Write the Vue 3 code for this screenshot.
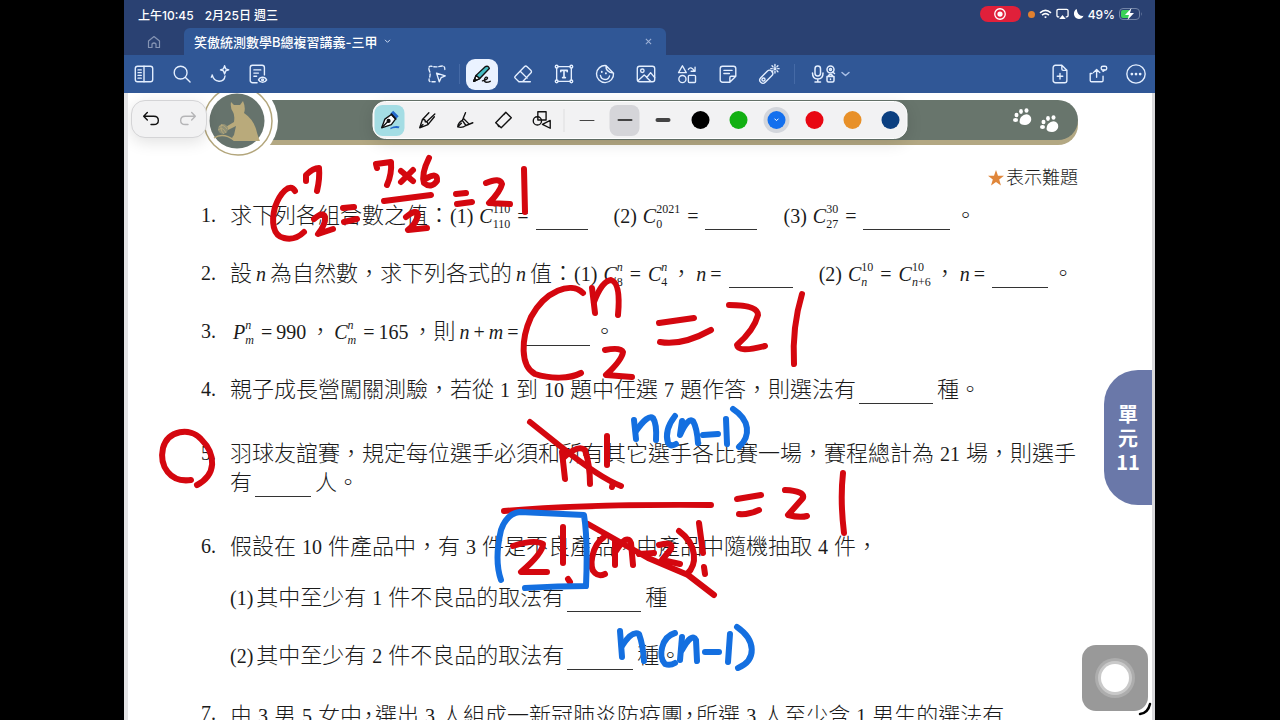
<script setup>
import { ref } from 'vue'

// Line tokens: t text, d spaced number, n upright maths, o operator, i italic maths,
// c letter with stacked indices, b blank, g gap, k half-width comma
const questions = [
  { no: 1, lines: [[
    ['t', '求下列各組合數之值：'], ['n', '(1)'], ['c', 'C', '110', '110'], ['o', '='], ['b', 52], ['g'],
    ['n', '(2)'], ['c', 'C', '2021', '0'], ['o', '='], ['b', 52], ['g'],
    ['n', '(3)'], ['c', 'C', '30', '27'], ['o', '='], ['b', 87], ['t', '。']
  ]] },
  { no: 2, lines: [[
    ['t', '設'], ['i', 'n'], ['t', '為自然數，求下列各式的'], ['i', 'n'], ['t', '值：'],
    ['n', '(1)'], ['c', 'C', 'n', '8'], ['o', '='], ['c', 'C', 'n', '4'], ['t', '，'], ['i', 'n'], ['o', '='], ['b', 64], ['g'],
    ['n', '(2)'], ['c', 'C', '10', 'n'], ['o', '='], ['c', 'C', '10', 'n+6'], ['t', '，'], ['i', 'n'], ['o', '='], ['b', 56], ['t', '。']
  ]] },
  { no: 3, lines: [[
    ['c', 'P', 'n', 'm'], ['o', '='], ['n', '990'], ['t', '，'], ['c', 'C', 'n', 'm'], ['o', '='], ['n', '165'], ['t', '，則'],
    ['i', 'n'], ['o', '+'], ['i', 'm'], ['o', '='], ['b', 64], ['t', '。']
  ]] },
  { no: 4, lines: [[
    ['t', '親子成長營闖關測驗，若從'], ['d', '1'], ['t', '到'], ['d', '10'], ['t', '題中任選'], ['d', '7'],
    ['t', '題作答，則選法有'], ['b', 74], ['t', '種。']
  ]] },
  { no: 5, wide: true, lines: [
    [['t', '羽球友誼賽，規定每位選手必須和所有其它選手各比賽一場，賽程總計為'], ['d', '21'], ['t', '場，則選手']],
    [['t', '有'], ['b', 56], ['t', '人。']]
  ] },
  { no: 6, wide: true, lines: [
    [['t', '假設在'], ['d', '10'], ['t', '件產品中，有'], ['d', '3'], ['t', '件是不良產品，由產品中隨機抽取'], ['d', '4'], ['t', '件，']]
  ], parts: [
    [['n', '(1)'], ['t', '其中至少有'], ['d', '1'], ['t', '件不良品的取法有'], ['b', 74], ['t', '種']],
    [['n', '(2)'], ['t', '其中至少有'], ['d', '2'], ['t', '件不良品的取法有'], ['b', 66], ['t', '種。']]
  ] },
  { no: 7, lines: [[
    ['t', '由'], ['d', '3'], ['t', '男'], ['d', '5'], ['t', '女中'], ['k', '，'], ['t', '選出'], ['d', '3'],
    ['t', '人組成一新冠肺炎防疫團'], ['k', '，'], ['t', '所選'], ['d', '3'], ['t', '人至少含'], ['d', '1'], ['t', '男生的選法有']
  ]] }
]

const leftTools = [
  { name: '側邊欄', svg: '<rect x="2.500" y="3.500" width="19" height="17" rx="2.500"/><path d="M12 3.500v17M5.500 7.500h3.500M5.500 10.500h3.500M5.500 13.500h3.500M5.500 16.500h3.500"/>' },
  { name: '搜尋', svg: '<circle cx="10.500" cy="10.500" r="7"/><path d="M15.800 15.800l5 5"/>' },
  { name: 'AI 助理', svg: '<path d="M3.500 13.500l-1 2M3.500 13c2 9 13 9 14 1"/><path d="M17 3l1.200 3.300 3.300 1.200-3.300 1.200-1.200 3.300-1.200-3.300-3.300-1.200 3.300-1.200z"/>' },
  { name: '閱讀模式', svg: '<path d="M11 21.500H6a2.500 2.500 0 0 1-2.500-2.500V5A2.500 2.500 0 0 1 6 2.500h10.500A2.500 2.500 0 0 1 19 5v8M7.500 7.500h7.500M7.500 11h5M7.500 14.500h3"/><path d="M12.500 18.500c2-4 7-4 9 0-2 3.500-7 3.500-9 0z"/><circle cx="17" cy="18.300" r="1"/>' }
]
const midTools = [
  { name: '套索', sep: true, svg: '<path stroke-dasharray="3.500 2" d="M10 20.500H5.500Q2.500 20.500 3.500 17 5.500 12 3.500 8 2 3 6 3.500q5 1.500 10 0 5-1 4.500 3.500-.5 1-.5 2"/><path d="M11.500 11l9.500 3-4.500 2-2 4.500z"/>' },
  { name: '筆', on: true, svg: '' },
  { name: '橡皮擦', svg: '<path d="M3.500 14.500L13.500 4q1.500-1.500 3 0l4 4q1.500 1.500 0 3l-9 9.500h-4l-4-4q-1-1 0-2zM9 9l7.500 7.500M12.500 20.500h7.500"/>' },
  { name: '文字', svg: '<path d="M5.500 4h13M5.500 20h13M4 5.500v13M20 5.500v13"/><circle cx="4" cy="4" r="1.500"/><circle cx="20" cy="4" r="1.500"/><circle cx="4" cy="20" r="1.500"/><circle cx="20" cy="20" r="1.500"/><path stroke-width="1.800" d="M8.500 9.500V8h7v1.500M12 8v8M10.500 16h3"/>' },
  { name: '貼圖', svg: '<path d="M13 2.800a9.300 9.300 0 1 0 8.300 8.300L13 2.800q-.5 7.500 8.300 8.300M7 13.500q1 4.500 5 4.500 4 0 5-4"/><path stroke-width="2" d="M8.500 9.500v.4M13 11v.4"/>' },
  { name: '圖片', svg: '<rect x="2.500" y="3.500" width="19" height="17" rx="2.500"/><circle cx="8" cy="8.500" r="1.900"/><path d="M3.500 19l6.500-6 3 2.500 4-5 4.500 5.500M12.500 15.500l4.500 4.500"/>' },
  { name: '形狀', svg: '<path d="M7 3l4.200 7.500H2.800zM13.500 7q2.500-4 6.500 1.500M20.800 4.500v4.500h-4.300"/><circle cx="7" cy="17.500" r="3.900"/><rect x="13.500" y="13.500" width="7.800" height="7.800" rx="1"/>' },
  { name: '便條', svg: '<path d="M14 21H6a2.500 2.500 0 0 1-2.500-2.500v-12.500A2.500 2.500 0 0 1 6 3.500h12A2.500 2.500 0 0 1 20.500 6v8.500zM14 21v-5q0-1.500 1.500-1.500h5M7.500 8h9M7.500 11.500h6"/>' },
  { name: '雷射筆', sep: true, svg: '<rect x=".5" y="11.500" width="17" height="7" rx="3.500" transform="rotate(-45 9 15)"/><circle cx="6" cy="18" r="1.700"/><path d="M18.500 1.500v2M18.500 9v2M14 6.200h1.500M21.500 6.200h1.500M15.300 3l1 1M21.700 3l-1 1M21.700 9.500l-1-1M15.300 9.500l1-1"/><circle cx="18.500" cy="6.200" r="1"/>' }
]
const rightTools = [
  { name: '新增頁面', svg: '<path d="M14 2.500H7A2.500 2.500 0 0 0 4.500 5v14A2.500 2.500 0 0 0 7 21.500h10a2.500 2.500 0 0 0 2.500-2.500V8zM14 2.500V6.500Q14 8 15.500 8h4M12 11.500v6M9 14.500h6"/>' },
  { name: '分享', svg: '<path d="M5.500 11.500H3.500v7.500A1.500 1.500 0 0 0 5 20.500h11a1.500 1.500 0 0 0 1.500-1.500v-4.500M10.500 15.500V7M7 10.500L10.500 7l3.500 3.500"/><rect x="15.500" y="3.500" width="6" height="4.200" rx="1.800"/><path d="M17.500 7.700v1.500L19.500 7.700"/>' },
  { name: '更多', svg: '<circle cx="12" cy="12" r="10"/><path stroke-width="3" d="M7.500 12h.01M12 12h.01M16.500 12h.01"/>' }
]
const pens = [
  { name: '鋼筆', svg: '<path fill="#2468c9" stroke="none" d="M13 5l3-3 6 6-3 3zM13 20.500q5-3 10-1.500l-1 2q-5-1-9 1z"/><path fill="#fff" d="M3.500 20.500L7 11l7-5 4.500 5-4.500 6z"/><path fill="none" d="M4 20l6-6M14 5.500l5 5.500"/><circle cx="11" cy="13" r="1.500" fill="#111"/>' },
  { name: '原子筆', svg: '<path d="M19.500 8.500L12.500 17 3.500 20.500 6.500 11.500 13.500 4M11 14L20 5.500M6.500 11.500Q10 11 9.500 14q3-.5 3 3M4 20l3-3"/>' },
  { name: '毛筆', svg: '<path d="M12 4L8.500 12.500Q4 15 3.500 19.500q5 1.500 9-1.500L20 15M8.500 12.500l4 5.500M9.500 10l6.500 6.500M3.500 19.500l4-4"/>' },
  { name: '螢光筆', svg: '<path d="M3.500 15L14.500 3.500l6 6L9.500 20.500zM12.500 6l1-1M6 18l1 1"/>' },
  { name: '圖形筆', svg: '<rect x="8" y="3" width="9" height="9"/><circle cx="7.500" cy="13" r="4.500"/><path d="M21.500 12.500v8.500l-8.500-4.300z"/>' }
]
const strokes = [1, 2, 4]
const colours = [
  ['黑色', 'black'], ['綠色', 'green'], ['藍色', 'blue'], ['紅色', 'red'], ['橘色', 'orange'], ['深藍', 'navy']
]
const stroke = ref(1)
const colour = ref('blue')
const pen = ref(0)

const redInk = [
  'M295 191C290 182 280 193 275 207C271 222 273 236 284 238C292 240 299 237 304 232',
  'M306 181V175Q313 168 319 168Q320 178 317 191', 'M314 219Q323 211 325 217Q326 224 318 234L333 229',
  'M343 208L354 207', 'M344 222L357 219', 'M377 168L376 164L391 162Q392 174 387 185', 'M401 171L413 181', 'M413 170L401 182',
  'M429 158Q421 174 424 183Q431 189 437 181Q438 172 427 178', 'M384 201L431 195',
  'M406 217Q417 208 418 215Q416 224 408 230L427 228', 'M456 194L466 193', 'M457 204L472 202',
  'M486 183Q500 177 502 184Q500 192 489 203L510 204', 'M524 169L525 212',
  'M583 293C571 281 545 291 531 317C521 339 520 366 535 374C550 379 570 379 581 373',
  'M592 288L595 313', 'M594 302Q602 281 611 280Q621 283 618 315', 'M605 350Q621 347 623 352Q622 360 606 375L632 377',
  'M659 323L694 318', 'M660 342Q682 346 711 330', 'M729 305Q758 305 758 315Q754 330 737 345Q738 353 765 346', 'M802 294Q792 327 794 364',
  'M191 480C170 483 159 466 163 448C168 430 190 427 201 439C217 455 216 475 197 485',
  'M530 422L560 446Q600 478 621 486', 'M562 452L565 479', 'M563 458Q578 444 585 450Q590 465 590 484', 'M607 436V465', 'M613 483L612 487',
  'M504 511Q580 504 711 505',
  'M513 546Q535 539 543 544Q543 553 521 572L547 572', 'M563 527V563', 'M568 579L570 582',
  'M604 537C592 545 588 568 595 573Q599 577 605 574', 'M615 541V565', 'M616 551Q627 533 631 543L633 565',
  'M639 554L654 553', 'M659 545Q674 541 671 549L662 560L680 564', 'M679 531C698 545 697 565 687 574', 'M699 523L703 553', 'M704 567L705 574',
  'M588 524L648 558L688 575L714 595',
  'M737 499L761 495', 'M739 514Q748 515 759 510', 'M785 490Q805 491 803 498L788 515Q800 518 807 516', 'M843 473Q840 500 844 533'
]
const blueInk = [
  'M634 420L636 439', 'M636 431Q648 414 653 418Q657 424 656 440', 'M675 416Q664 430 668 443Q671 447 676 444',
  'M682 421L680 435Q688 417 693 421Q697 428 698 443', 'M703 435L718 434', 'M726 419L727 444', 'M733 409C750 420 751 436 739 447',
  'M501 580Q494 560 501 530Q507 513 520 512L584 515Q588 540 586 586Q560 586 525 588',
  'M620 631L622 657', 'M622 646Q632 630 639 634Q643 645 644 661', 'M675 633C661 637 658 657 665 664Q670 666 675 663',
  'M682 637L680 660', 'M682 650Q692 632 696 640L697 661', 'M705 652H719', 'M730 634L728 662', 'M737 627C756 640 757 660 738 668'
]
</script>

<template>
  <div class="stage">
    <header class="head">
      <div class="status">
        <span>上午10:45</span><span>2月25日 週三</span>
        <span class="rec"><svg viewBox="0 0 16 16" width="14" height="14"><circle cx="8" cy="8" r="6" fill="none" stroke="#fff" stroke-width="1.500" /><circle cx="8" cy="8" r="3" fill="#fff" /></svg></span>
        <i class="privacy"></i>
        <svg viewBox="0 0 14 11" width="13" height="10" fill="none" stroke="#fff" stroke-width="1.800"><path d="M1 4.200q6-5.400 12 0M3.200 6.700q3.800-3.400 7.600 0" /><path d="M5.500 8.700q1.500-1.400 3 0L7 10.300z" fill="#fff" stroke="none" /></svg>
        <svg viewBox="0 0 14 12" width="13" height="12" fill="none" stroke="#fff" stroke-width="1.400"><path d="M3.500 9H2.500Q1 9 1 7.500v-5Q1 1 2.500 1h9Q13 1 13 2.500v5Q13 9 11.500 9h-1" /><path d="M7 7l3.500 4.500h-7z" fill="#fff" stroke="none" /></svg>
        <svg viewBox="0 0 12 12" width="11" height="12"><path d="M4 .5Q1 2 1 6q.5 5 5.500 5.500Q10 11.500 11.500 8 5 9 4 .5z" fill="#fff" /></svg>
        <span class="pct">49%</span>
        <svg viewBox="0 0 24 12" width="24" height="12"><rect x=".5" y=".5" width="20" height="11" rx="3.500" fill="none" stroke="#7183a6" /><path d="M4 2h6v8H4q-2 0-2-2V4q0-2 2-2z" fill="#3bd158" /><path d="M22 4v4q1.500-2 0-4" fill="#7183a6" /><path d="M12.500 0L6 7h4l-1.500 5L15 5h-4z" fill="#fff" /></svg>
      </div>
      <nav class="tabs">
        <button class="home" aria-label="首頁"><svg viewBox="0 0 14 14" width="14" height="14" fill="none" stroke="#8594b4" stroke-width="1.200" stroke-linejoin="round"><path d="M1.500 6L7 1.500 12.500 6v6.500h-3.500V9Q7 7 5 9v3.500H1.500z" /></svg></button>
        <div class="tab">
          <button class="title">笑傲統測數學B總複習講義-三甲
            <svg viewBox="0 0 8 6" width="7" height="5" fill="none" stroke="#c9d8f0" stroke-width="1.200"><path d="M1 1l3 3 3-3" /></svg>
          </button>
          <button class="close" aria-label="關閉分頁"><svg viewBox="0 0 8 8" width="7" height="7" stroke="#9db1d6" stroke-width="1.200"><path d="M1 1l6 6M7 1L1 7" /></svg></button>
        </div>
      </nav>
      <div class="bar">
        <div class="group left">
          <button v-for="t in leftTools" :key="t.name" class="tool" :aria-label="t.name"><svg class="ico" viewBox="0 0 24 24" v-html="t.svg"></svg></button>
        </div>
        <div class="group mid">
          <template v-for="t in midTools" :key="t.name">
            <button class="tool" :class="{ on: t.on }" :aria-label="t.name">
              <svg v-if="t.on" class="ico dark" viewBox="0 0 24 24"><path d="M3 20L5.500 13.500 15.500 4q3.500-1.500 4.500 2L9.500 17z" fill="#45bcc4" /><path d="M3 20L5.500 13.500l4 3.500z" fill="#fff" /><path d="M3 20l1.200-3 1.500 1.600z" fill="#111" /><path d="M12.500 19.500q6-1.500 5.500-3.500-1.500-1.500-3 1-1 4 1.500 4t4.500-1" /></svg>
              <svg v-else class="ico" viewBox="0 0 24 24" v-html="t.svg"></svg>
            </button>
            <i v-if="t.sep" class="sep" :class="{ first: t.name === '套索' }"></i>
          </template>
          <button class="mic" aria-label="錄音">
            <svg viewBox="0 0 40 24" width="40" height="24" class="wide"><rect x="4" y="4" width="5.500" height="10" rx="2.700" /><path d="M1.500 11q0 6 5.300 6t5.200-6M6.800 17v2.500M4 20h5.500" /><circle cx="19.500" cy="7.500" r="3.500" /><circle cx="19.500" cy="7.500" r="1" /><path d="M21.500 10l2 1.500M17.500 14.500v-1q2-2 4 0v1M16 14.500h7v4q0 1.500-1.500 1.500h-4Q16 20 16 18.500zM19.500 17v.5" /><path d="M31 10.500l3.500 3 3.500-3" stroke="#a9bfe6" /></svg>
          </button>
        </div>
        <div class="group right">
          <button v-for="t in rightTools" :key="t.name" class="tool" :aria-label="t.name"><svg class="ico" viewBox="0 0 24 24" v-html="t.svg"></svg></button>
        </div>
      </div>
    </header>

    <main class="sheet" lang="zh-Hant">
      <div class="banner">
        <svg class="emblem" viewBox="0 0 80 80" width="80" height="80">
          <circle cx="40" cy="40" r="40" fill="#fff" />
          <circle cx="40" cy="40" r="34" fill="none" stroke="#b3a67c" stroke-width="1.500" />
          <circle cx="39" cy="40" r="27.500" fill="#66736c" />
          <path fill="#b9aa7b" d="M33 21l3 3h6l3-4q3 7 1 12 9 6 12 16 2 8 4 12H36q-4-2 0-6l2-9-8 4q-3 0-4-2l10-6q1-7-1-10-3-4-2-10z" />
          <path fill="none" stroke="#b9aa7b" stroke-width="1.500" d="M16 57q9-6 20 2" />
          <circle cx="25" cy="48" r="5" fill="#8f9077" /><path d="M21 46q4-4 8 2M20 49q5-4 8 3M24 43q-3 5 2 10" fill="none" stroke="#b9aa7b" stroke-width=".8" />
        </svg>
        <svg class="paws" viewBox="0 0 46 26" width="46" height="26" fill="#fff">
          <g id="paw"><path d="M8 9q4-4 8-2 3 2 2 6-2 4-6 4-5 0-5.500-3 0-3 1.500-5z" /><ellipse cx="2.500" cy="12" rx="2.500" ry="2" /><ellipse cx="3.500" cy="7" rx="2" ry="2.200" /><ellipse cx="8" cy="3.500" rx="1.900" ry="2.400" /><ellipse cx="13.500" cy="2.500" rx="2" ry="2.200" /></g>
          <use href="#paw" x="27" y="7" />
        </svg>
      </div>
      <p class="hint"><svg viewBox="0 0 20 20" width="16" height="16"><path fill="#e0863a" d="M10 0l2.500 7.200H20l-6 4.600 2.200 7.700L10 15l-6.200 4.500L6 11.800 0 7.200h7.500z" /></svg>表示難題</p>

      <ol class="questions">
        <li v-for="q in questions" :key="q.no">
          <span class="no">{{ q.no }}.</span>
          <div class="body">
            <p v-for="(line, k) in q.lines.concat(q.parts || [])" :key="k" class="line" :class="{ first: k === q.lines.length, part: k > q.lines.length }">
              <template v-for="(tk, j) in line" :key="j">
                <span v-if="tk[0] === 'c'" class="comb"><i>{{ tk[1] }}</i><span class="stack"><span v-for="(s, m) in tk.slice(2)" :key="m"><template v-for="(ch, x) in s" :key="x"><i v-if="/[nm]/.test(ch)">{{ ch }}</i><template v-else>{{ ch }}</template></template></span></span></span>
                <span v-else-if="tk[0] === 'b'" class="blank" :style="{ width: tk[1] + 'px' }"></span>
                <span v-else :class="'k-' + tk[0]">{{ tk[1] }}</span>
              </template>
            </p>
          </div>
        </li>
      </ol>

      <aside class="unit"><span>單</span><span>元</span><span>11</span></aside>

      <svg class="ink" viewBox="124 93 1031 627" width="1031" height="627" role="img" aria-label="手寫筆記">
        <path v-for="d in redInk" :key="d" :d="d" stroke="#d4070f" />
        <path v-for="d in blueInk" :key="d" :d="d" stroke="#146fe0" />
      </svg>

      <div class="undo">
        <button aria-label="復原"><svg viewBox="0 0 24 24" class="ico dark"><path d="M8 5L4 9l4 4M4 9h11q5 0 5 4.500T15 18h-3" /></svg></button>
        <button aria-label="重做" disabled><svg viewBox="0 0 24 24" class="ico faded"><path d="M16 5l4 4-4 4M20 9H9q-5 0-5 4.500T9 18h3" /></svg></button>
      </div>

      <div class="pens">
        <button v-for="(p, k) in pens" :key="p.name" :class="{ pen: pen === k }" :aria-label="p.name" @click="pen = k"><svg class="ico dark" viewBox="0 0 24 24" v-html="p.svg"></svg></button>
        <button v-for="(s, k) in strokes" :key="s" :class="{ thick: stroke === k, divide: k === 0 }" :aria-label="'線條粗細 ' + s" @click="stroke = k"><i class="dash" :class="'w' + s"></i></button>
        <button v-for="c in colours" :key="c[1]" :aria-label="c[0]" @click="colour = c[1]">
          <span class="dot" :class="[c[1], { picked: colour === c[1] }]"><svg v-if="colour === c[1]" viewBox="0 0 8 6" width="6" height="4" fill="none" stroke="#fff" stroke-width="1.500"><path d="M1 1l3 3 3-3" /></svg></span>
        </button>
      </div>

      <svg class="corner" viewBox="0 0 14 14" width="14" height="14"><path d="M2 12Q10 11 12 2" fill="none" stroke="#000" stroke-width="2.500" stroke-linecap="round" /></svg>
      <button class="assist" aria-label="輔助觸控"><i></i></button>
    </main>
  </div>
</template>

<style>
html, body { background: #000; }
</style>

<style scoped>
.stage {
  height: 100vh;
  box-sizing: border-box;
  padding: 0 125px 0 124px;
  display: flex;
  flex-direction: column;
  background: #000;
  font-family: Inter, "Noto Sans CJK TC", sans-serif;
}
button { padding: 0; border: 0; background: none; color: inherit; font: inherit; display: flex; align-items: center; justify-content: center; }
p, ol { margin: 0; padding: 0; }
svg { flex: none; display: block; }
.ico { width: 22px; height: 22px; }
.ico, .wide { fill: none; stroke: #e4efff; stroke-width: 1.5; stroke-linecap: round; stroke-linejoin: round; }
.dark { stroke: #111; }
.faded { stroke: #b5b5b7; }

.head { background: #305796; color: #fff; }
.status { height: 28px; display: flex; align-items: center; background: #2a4172; padding: 0 12px 0 14px; font-size: 12px; font-weight: 500; gap: 11px; }
.rec { margin-left: auto; width: 41px; height: 16px; border-radius: 8px; background: #e0203a; display: flex; align-items: center; justify-content: center; }
.privacy { width: 7px; height: 7px; border-radius: 50%; background: #e0802f; margin-left: -4px; }
.status > svg, .status .pct { margin-left: -7px; }
.tabs { height: 27px; display: flex; background: #2a4172; }
.home { width: 60px; }
.tab { width: 482px; border-radius: 6px 6px 0 0; background: #305796; display: flex; align-items: center; justify-content: space-between; padding: 0 14px 0 10px; box-sizing: border-box; }
.title { font-size: 13px; font-weight: 500; gap: 6px; }
.bar { height: 38px; display: grid; grid-template-columns: 1fr auto 1fr; align-items: center; }
.group { display: flex; align-items: center; }
.left { padding-left: 1px; }
.right { justify-content: flex-end; }
.left .tool, .right .tool { width: 38px; height: 32px; }
.mid { gap: 9px; }
.mid .tool { width: 32px; height: 31px; border-radius: 9px; }
.mid .on { background: #eaf2ff; }
.sep { width: 1px; height: 20px; background: #456aa6; }
.sep.first { margin: 0 -3px; }
.mic { width: 54px; height: 32px; }

.sheet { position: relative; flex: 1; min-height: 0; overflow: hidden; background: #fff; border-left: 4px solid #e4e4e6; border-right: 3px solid #d9d9dc; box-sizing: border-box; padding: 7px 74px 0 73px; font-family: "Liberation Serif", "Noto Sans CJK TC", serif; color: #1b1b1b; }
.banner { position: relative; height: 40px; margin-left: 67px; border-radius: 0 20px 20px 0; background: #68756c; box-shadow: 0 5px 0 #b3a883; display: flex; justify-content: flex-end; }
.emblem { position: absolute; left: -70px; top: -19px; }
.paws { margin: 8px 19px 0 0; }
.hint { margin-top: 25px; display: flex; align-items: center; justify-content: flex-end; gap: 2px; font-size: 18px; line-height: 26px; font-weight: 300; }
.questions { list-style: none; margin-top: 10px; font-size: 20px; line-height: 29px; }
.questions li { display: grid; grid-template-columns: 29px 1fr; margin-bottom: 29px; }
.questions li:nth-child(4), .questions li:nth-child(5) { margin-bottom: 35px; }
.line { display: flex; align-items: baseline; white-space: nowrap; height: 29px; }
.line.first { margin-top: 22px; }
.line.part { margin-top: 29px; }
.k-t, .k-k { font-size: 22px; font-weight: 300; }
.k-k { font-family: "Noto Sans CJK TC", sans-serif; font-feature-settings: "halt"; margin: 0 1px; }
.k-d { margin: 0 6px; }
.k-i { margin: 0 4px; font-style: italic; }
.k-n { margin-right: 3px; }
.k-o { margin-right: 4px; }
.k-o + .k-i { margin-left: 0; }
.k-g { width: 22px; }
.blank { align-self: flex-end; height: 1px; background: #333; margin: 0 4px 0 3px; }
.comb { display: inline-flex; align-items: baseline; margin: 0 3px; }
.comb + .k-o { margin-left: 4px; }
.stack { display: inline-flex; flex-direction: column; font-size: 12px; line-height: 15px; position: relative; top: -10px; }

.unit { position: absolute; right: 0; top: 277px; width: 48px; height: 135px; border-radius: 34px 0 0 34px; background: #6a78a9; color: #fff; font: 700 20px/24px "Noto Sans CJK TC", sans-serif; display: flex; flex-direction: column; align-items: center; justify-content: center; }
.ink { position: absolute; left: -4px; top: 0; fill: none; stroke-width: 6; stroke-linecap: round; stroke-linejoin: round; pointer-events: none; }

.undo, .pens { position: absolute; box-sizing: border-box; height: 38px; background: #f2f2f3; border: 1px solid #d4d4d6; box-shadow: 0 4px 16px rgba(0, 0, 0, .12); display: flex; align-items: center; }
.undo { left: 3px; top: 7px; width: 76px; border-radius: 14px; }
.undo button { flex: 1; height: 36px; }
.pens { top: 8px; left: 50%; transform: translateX(-50%); padding: 0 1px; gap: 8px; border-radius: 13px; border-color: #fff; }
.pens button { position: relative; width: 30px; height: 31px; border-radius: 8px; }
.pens .pen { background: #a4dde4; }
.pens .thick { background: #d5d5d9; }
.pens .divide { margin-left: 7px; }
.divide::before { content: ""; position: absolute; left: -8px; top: 4px; height: 23px; border-left: 1px solid #dedee0; }
.dash { width: 15px; height: 1px; border-radius: 2px; background: #444; }
.dash.w2 { height: 2px; }
.dash.w4 { height: 4px; }
.dot { width: 18px; height: 18px; border-radius: 50%; display: flex; align-items: center; justify-content: center; }
.picked { box-shadow: 0 0 0 4px #d3d6dc; }
.black { background: #000; }
.green { background: #12b012; }
.blue { background: #1470ee; }
.red { background: #e80712; }
.orange { background: #e89028; }
.navy { background: #0b3f80; }

.assist { position: absolute; right: 4px; bottom: 9px; width: 66px; height: 66px; border-radius: 14px; background: #999; }
.assist i { width: 28px; height: 28px; border-radius: 50%; background: #fff; box-shadow: 0 0 0 3px #c9c9c9, 0 0 0 6px #adadad; }
.corner { position: absolute; right: 0; bottom: 4px; }
</style>
